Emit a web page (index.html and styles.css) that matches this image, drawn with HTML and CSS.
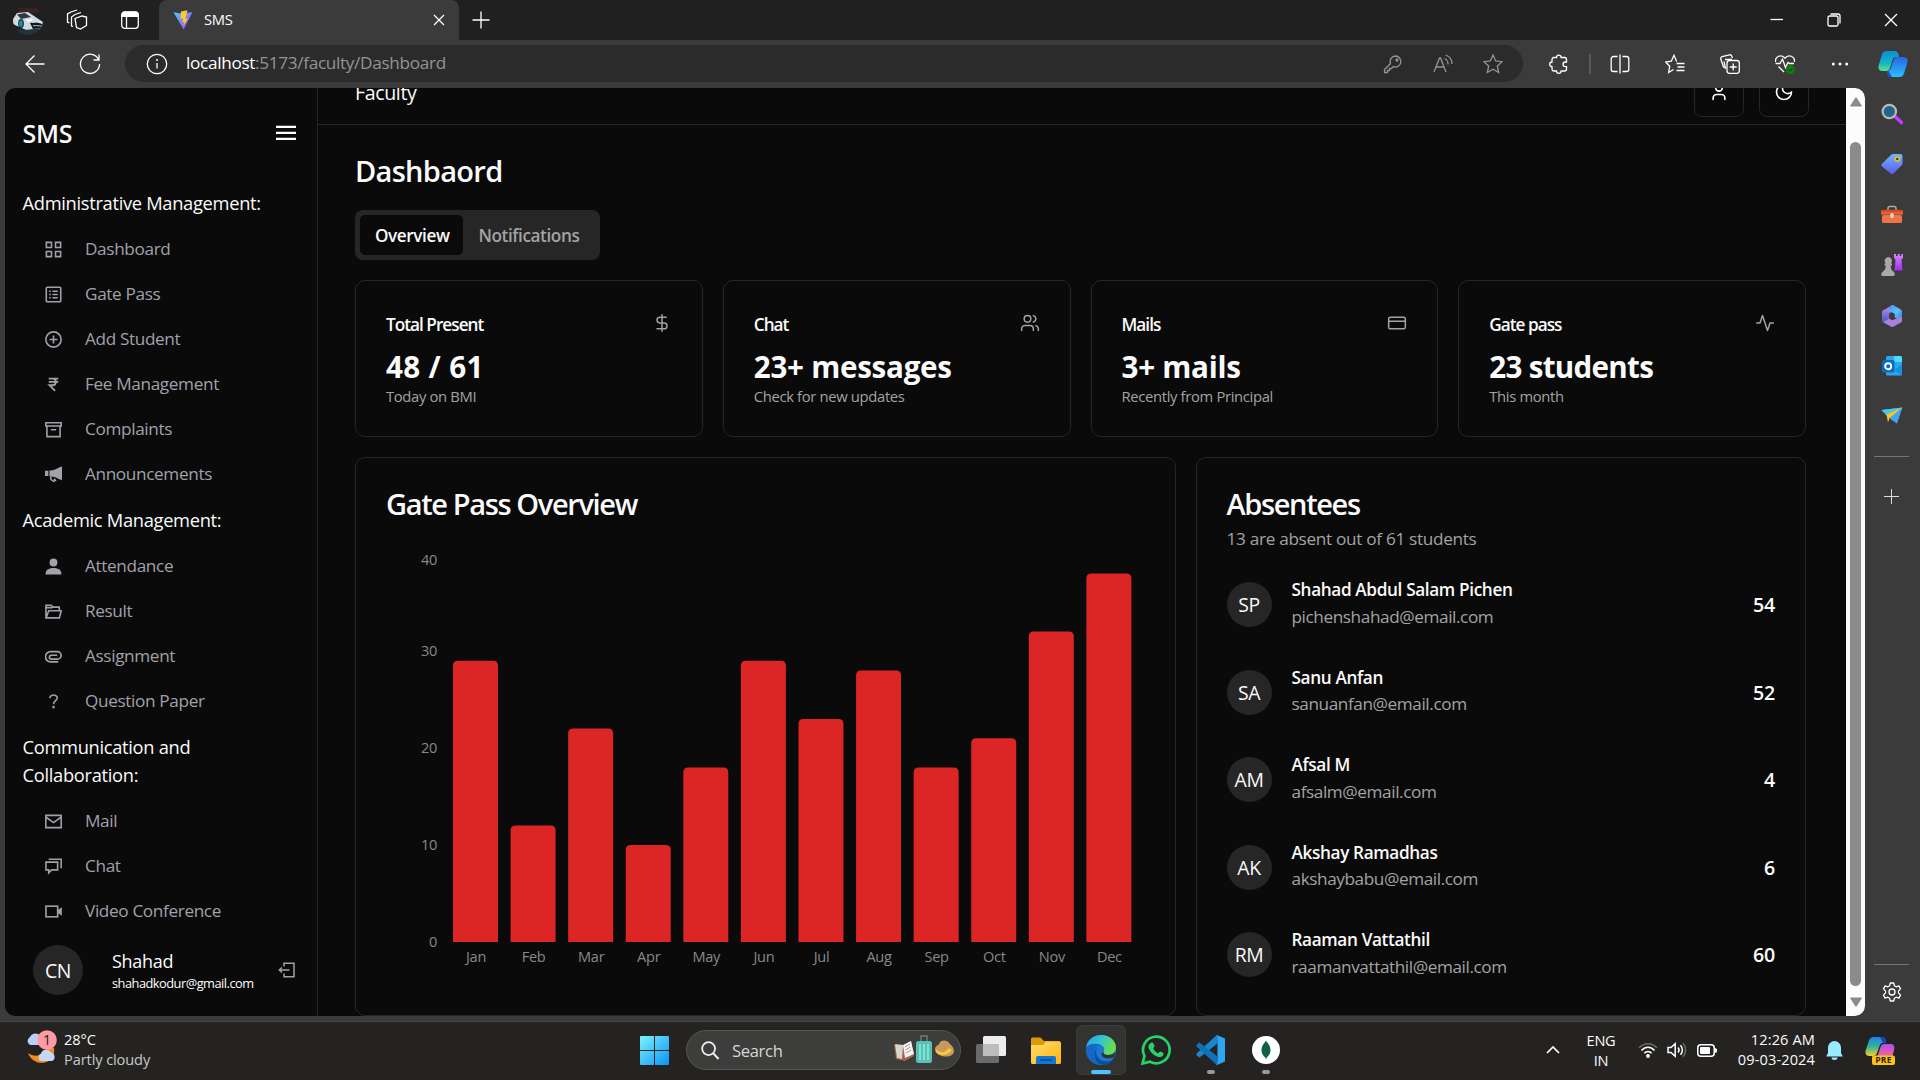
FILE: index.html
```html
<!DOCTYPE html>
<html lang="en">
<head>
<meta charset="utf-8">
<title>SMS</title>
<link rel="stylesheet" href="styles.css">
</head>
<body>
<svg class="defs" width="0" height="0" aria-hidden="true">
  <defs>
    <linearGradient id="gVite" x1="0" y1="0" x2="1" y2="1"><stop offset="0" stop-color="#41d1ff"/><stop offset="1" stop-color="#bd34fe"/></linearGradient>
    <linearGradient id="gTeal" x1="0" y1="0" x2="0" y2="1"><stop offset="0" stop-color="#0d8fd0"/><stop offset=".6" stop-color="#12b5c9"/><stop offset="1" stop-color="#5ee08c"/></linearGradient>
    <linearGradient id="gBlue" x1="0" y1="0" x2="0" y2="1"><stop offset="0" stop-color="#2764e7"/><stop offset="1" stop-color="#2bc0ff"/></linearGradient>
    <linearGradient id="gTag" x1="0" y1="0" x2="0" y2="1"><stop offset="0" stop-color="#6cb4ff"/><stop offset="1" stop-color="#5b5fe8"/></linearGradient>
    <linearGradient id="gRed" x1="0" y1="0" x2="0" y2="1"><stop offset="0" stop-color="#d13c12"/><stop offset="1" stop-color="#f3713f"/></linearGradient>
    <linearGradient id="gPurple" x1="0" y1="0" x2="0" y2="1"><stop offset="0" stop-color="#d685ff"/><stop offset="1" stop-color="#a22cf0"/></linearGradient>
    <linearGradient id="gWin" x1="0" y1="0" x2="1" y2="1"><stop offset="0" stop-color="#7df3fb"/><stop offset="1" stop-color="#0a93f5"/></linearGradient>
    <linearGradient id="gFolder" x1="0" y1="0" x2="1" y2="1"><stop offset="0" stop-color="#ffdc6b"/><stop offset="1" stop-color="#fcb50f"/></linearGradient>
    <linearGradient id="gEdge" x1="0" y1="0" x2="1" y2=".4"><stop offset="0" stop-color="#2a9de8"/><stop offset=".5" stop-color="#33c1d6"/><stop offset="1" stop-color="#66e04e"/></linearGradient>
    <linearGradient id="gPre" x1="0" y1="0" x2="0" y2="1"><stop offset="0" stop-color="#1f7ff0"/><stop offset=".5" stop-color="#2fb39a"/><stop offset="1" stop-color="#f2cf2b"/></linearGradient>
    <linearGradient id="gPink" x1="0" y1="0" x2="0" y2="1"><stop offset="0" stop-color="#b04df0"/><stop offset="1" stop-color="#ff6a80"/></linearGradient>
    <linearGradient id="gOffL" x1="0" y1="0" x2="0" y2="1"><stop offset="0" stop-color="#b79af0"/><stop offset="1" stop-color="#4a4fc4"/></linearGradient>
    <linearGradient id="gOffR" x1="0" y1="0" x2="1" y2="1"><stop offset="0" stop-color="#4a8ff0"/><stop offset=".5" stop-color="#5bc4fa"/><stop offset="1" stop-color="#3566dd"/></linearGradient>
    <clipPath id="cAvatar"><circle cx="15" cy="15" r="15"/></clipPath>
  </defs>
</svg>

<div class="screen">
  <header class="titlebar">
    <svg class="profile-pic" viewBox="0 0 30 30"><g clip-path="url(#cAvatar)"><rect width="30" height="30" fill="#1b2023"/><path d="M6 3h20v5H6z" fill="#3a2220"/><path d="M0 14L4 8l11-1 6 4 9 6v7l-12 3L4 21 0 19z" fill="#cfdae2"/><path d="M4 9.500l8-1.500 6 4-10 2z" fill="#2c3a44"/><path d="M17 18l6-1 6 2v4l-9 1z" fill="#10181e"/><path d="M13 15l6-1 1 1-5 2z" fill="#fff"/><path d="M19 17.500l9-.5M20 20.500l9 .5" stroke="#dde6ec" stroke-width=".8"/><ellipse cx="8" cy="18.500" rx="2.900" ry="4.500" fill="#12323b"/><ellipse cx="7.800" cy="18.500" rx="1.900" ry="3.300" fill="#1e8b9d"/><path d="M0 24l12 1 18-2v7H0z" fill="#22333d"/></g></svg>
    <svg class="ic-ws" viewBox="0 0 22 22"><g class="line"><path d="M8.500 9.500l7-2.500 4.500 1v8.500l-6 3.500-4-1.500z" transform="translate(.5 0)"/><path d="M7 17.500L5.500 17V8L9 5.500l6-2"/><path d="M3.500 14L1.500 13.200V5L5 3l6-2"/></g></svg>
    <svg class="ic-tabs" viewBox="0 0 20 20"><rect x="1.700" y="2" width="16.600" height="16.300" rx="3" class="line"/><path d="M1.500 7V4.500a3 3 0 013-3h11a3 3 0 013 3V7z" fill="#fff"/><path d="M6.500 7v11" class="line"/></svg>
    <div class="tab">
      <svg class="favicon" viewBox="0 0 20 20"><path d="M.5 2.200l9 1.600 10-1.800L10.600 19.400z" fill="url(#gVite)"/><path d="M14.500.3L8 1.600l-.5 7.200 2.500-.4-.8 4 2-.6-1 4.200 4.800-7.600-2.600.5z" fill="#ffc928"/></svg>
      <span class="tab-title">SMS</span>
      <svg class="ic-close" viewBox="0 0 12 12"><path d="M1 1l10 10M11 1L1 11" class="line"/></svg>
    </div>
    <svg class="ic-new" viewBox="0 0 18 18"><path d="M9 .5v17M.5 9h17" class="line"/></svg>
    <div class="window-buttons">
      <svg viewBox="0 0 14 14"><path d="M.5 6.500h12.500" class="line"/></svg>
      <svg viewBox="0 0 14 14"><rect x="1" y="3" width="10" height="10" rx="1.500" class="line"/><path d="M3.500 1H11a2 2 0 012 2v7.500" class="line"/></svg>
      <svg viewBox="0 0 14 14"><path d="M1 1l12 12M13 1L1 13" class="line"/></svg>
    </div>
  </header>

  <div class="toolbar">
    <svg class="ic-back" viewBox="0 0 20 20"><path d="M19.500 10H1M9.500 1.500L1 10l8.500 8.500" class="line"/></svg>
    <svg class="ic-reload" viewBox="0 0 22 22"><path d="M19.800 7A9.600 9.600 0 1020.600 11M20 1.500V7h-5.500" class="line"/></svg>
    <div class="address">
      <svg class="ic-info" viewBox="0 0 22 22"><circle cx="11" cy="11" r="9.700" class="line"/><path d="M11 10v5.500" class="line"/><circle cx="11" cy="7" r="1" fill="#fff"/></svg>
      <span class="url"><b>localhost</b>:5173/faculty/Dashboard</span>
      <div class="address-icons">
        <svg viewBox="0 0 20 20"><path d="M12.500 2a5.500 5.500 0 11-2.200 10.600L8.500 14.500H6.500v2h-2V18.500H1.500v-3l6-6A5.500 5.500 0 0112.500 2z" class="dim"/><circle cx="14" cy="6" r="1" class="dim"/></svg>
        <svg viewBox="0 0 20 20"><path d="M1 18L6.500 4h1L13 18M3 13h8M11.500 4.500a6 6 0 013.500 6M12.500 1a9.500 9.500 0 016.500 9" class="dim"/></svg>
        <svg viewBox="0 0 20 20"><path d="M10 1l2.700 6 6.500.7-4.900 4.300 1.400 6.500L10 15.200l-5.700 3.300 1.400-6.500L.8 7.700 7.300 7z" class="dim"/></svg>
      </div>
    </div>
    <div class="actions">
      <svg viewBox="0 0 20 20"><path d="M4.500 3.500h3a2.300 2.300 0 014.600 0h3.400a2 2 0 012 2V8h-1.200a2.300 2.300 0 000 4.600h1.200v2.400a2 2 0 01-2 2h-3.400a2.300 2.300 0 01-4.600 0h-3a2 2 0 01-1.500-2v-2.400a2.300 2.300 0 010-4.600V5.500a2 2 0 011.500-2z" class="line"/></svg>
      <i class="bar-divider"></i>
      <svg viewBox="0 0 20 20"><path d="M7.500 2.500H3.500a2.300 2.300 0 00-2.300 2.300v10.400a2.300 2.300 0 002.300 2.300h4M12.500 2.500h4a2.300 2.300 0 012.300 2.300v10.400a2.300 2.300 0 01-2.300 2.300h-4M10 .5v19" class="line"/></svg>
      <svg viewBox="0 0 20 20"><path d="M12 7.200h-.5L9 1.300 6.300 7.200.7 8l4 4.200-1 6.300L8.500 15.500M11.500 9.500h8M12.500 13h7M11.500 16.500h8" class="line"/></svg>
      <svg viewBox="0 0 20 20"><path d="M4.500 13.500l-1-.5-2.700-8A2 2 0 012 2.700L9.500.8a2 2 0 012.300 1.300L12.500 4M5.500 15L4 7.500M5 5.500h7" class="line"/><rect x="7" y="6.500" width="12.300" height="12.800" rx="2.500" class="line"/><path d="M13.200 9.500v7M9.700 13h7" class="line"/></svg>
      <svg viewBox="0 0 20 20"><path d="M.5 8C-.3 2.500 6.500-.5 10 4.200 13.500-.5 20.300 2.500 19.500 8M.5 9.500H5L7.500 5l3 8.500L13 8.500l1.500 1H19M3.500 12.500L9 18" class="line"/><circle cx="15.300" cy="15.500" r="4.500" fill="#107c10"/><path d="M13.300 15.500l1.500 1.500 2.600-2.700" fill="none" stroke="#082f08"/></svg>
      <svg viewBox="0 0 20 20"><g fill="#fff"><circle cx="3.300" cy="10" r="1.500"/><circle cx="10" cy="10" r="1.500"/><circle cx="16.700" cy="10" r="1.500"/></g></svg>
      <svg class="copilot" viewBox="0 0 30 28"><path d="M8.500 1H17c2 0 3 1.500 3.500 3.500L21 7H18c-2 0-3 1.200-3.500 3L12 18c-.7 2-2 3-4 3H4.500C1 21-.3 18.500.8 15L4 4.500C4.700 2.200 6.200 1 8.500 1z" fill="url(#gTeal)"/><path d="M21.500 27H13c-2 0-3-1.500-3.500-3.500L9 21c2 0 3.500-1.200 4-3l2.500-8c.7-2 2-3 4-3h6c3.500 0 4.800 2.500 3.700 6L26 23.500c-.7 2.300-2.200 3.500-4.500 3.500z" fill="url(#gBlue)"/><path d="M9 21h1.500L14 27h-1.500C10 27 9 24 9 21z" fill="#1d4fd0"/></svg>
    </div>
  </div>

  <div class="viewport">
    <div class="page">
      <aside class="sidebar">
        <div class="brand"><h2>SMS</h2><svg viewBox="0 0 20 16"><path d="M0 1.800h20M0 7.800h20M0 13.800h20" stroke="#fff" stroke-width="2.200"/></svg></div>
        <h3>Administrative Management:</h3>
        <ul>
          <li><svg viewBox="0 0 16 16"><path d="M1.300 1.300h4.800v4.800H1.300zM9.900 1.300h4.800v4.800H9.900zM1.300 9.900h4.800v4.800H1.300zM9.900 9.900h4.800v4.800H9.900z"/></svg>Dashboard</li>
          <li><svg viewBox="0 0 16 16"><rect x="1.200" y="1.200" width="13.600" height="13.600" rx="1"/><path d="M4 5h1.500M7 5h5M4 8h1.500M7 8h5M4 11h1.500M7 11h5"/></svg>Gate Pass</li>
          <li><svg viewBox="0 0 16 16"><circle cx="8" cy="8" r="7.200"/><path d="M8 4.300v7.400M4.300 8h7.400"/></svg>Add Student</li>
          <li><svg viewBox="0 0 16 16"><path d="M3.500 2.500h9M3.500 5.600h9M4 2.500h3c4.200 0 4.200 6.200 0 6.200H4.200L9.500 14" stroke-width="1.700"/></svg>Fee Management</li>
          <li><svg viewBox="0 0 16 16"><path d="M.8 1.700h14.400v3H.8zM1.800 4.700v10h12.400v-10M5.500 8.300h5"/></svg>Complaints</li>
          <li><svg viewBox="0 0 16 16"><path d="M0 4.500h3.200v5H0zM4.200 4.300C8.500 4.300 12 2.500 14.500.8H16V13h-1.500C12 11.300 9 10 4.200 9.800z" fill="#a1a1aa" stroke="none"/><path d="M5.500 10c-.5 2 .5 4 3 4.300l1.300-.8L8.500 12"/></svg>Announcements</li>
        </ul>
        <h3>Academic Management:</h3>
        <ul>
          <li><svg viewBox="0 0 16 16"><g fill="#a1a1aa" stroke="none"><circle cx="8" cy="4.200" r="3.700"/><path d="M.5 15.500C.5 11.500 3 9.500 8 9.500s7.500 2 7.500 6z"/></g></svg>Attendance</li>
          <li><svg viewBox="0 0 16 16"><path d="M.9 14V2.200h5l1.500 1.700h6V7M1 14L3.500 7.300h11.800L13.500 14zM1 4.500h6"/></svg>Result</li>
          <li><svg viewBox="0 0 16 16"><path d="M12.500 13H5.200a4.600 4.600 0 010-9.500h6.500a3.300 3.300 0 010 6.900H6a1.800 1.800 0 010-3.600h5.500" stroke-width="1.600"/></svg>Assignment</li>
          <li><svg viewBox="0 0 16 16"><path d="M4.600 5C4.600.8 11.600 1 11.500 4.800 11.500 7.200 8 7.200 8 10.500"/><circle cx="8" cy="13.300" r=".5"/></svg>Question Paper</li>
        </ul>
        <h3>Communication and Collaboration:</h3>
        <ul>
          <li><svg viewBox="0 0 16 16"><path d="M.8 2.200h14.400v11.600H.8zM1 4l7 5 7-5"/></svg>Mail</li>
          <li><svg viewBox="0 0 16 16"><path d="M.9 3.900h11v7.300H6.300L3.500 14v-2.800H.9zM3.500 1.200h11.700v8.500"/></svg>Chat</li>
          <li><svg viewBox="0 0 16 16"><rect x=".9" y="3" width="11" height="10"/><path d="M12 7l3.500-2.500v7L12 9z" fill="#a1a1aa" stroke-width=".6"/></svg>Video Conference</li>
        </ul>
        <div class="account">
          <span class="avatar big">CN</span>
          <div class="who"><span class="who-name">Shahad</span><span class="who-mail">shahadkodur@gmail.com</span></div>
          <svg viewBox="0 0 17 16"><path d="M6 4.500V1.200h10v13.600H6v-3.300M11.500 8H1M4 5.500L1.300 8 4 10.500" fill="none" stroke="#a1a1aa" stroke-width="1.500"/></svg>
        </div>
      </aside>

      <main class="main">
        <div class="topnav">
          <span>Faculty</span>
          <div class="nav-buttons">
            <button><svg class="lucide" viewBox="0 0 24 24"><path d="M19 21v-2a4 4 0 0 0-4-4H9a4 4 0 0 0-4 4v2"/><circle cx="12" cy="7" r="4"/></svg></button>
            <button><svg class="lucide" viewBox="0 0 24 24"><path d="M12 3a6 6 0 0 0 9 9 9 9 0 1 1-9-9Z"/></svg></button>
          </div>
        </div>
        <div class="content">
          <h1>Dashbaord</h1>
          <div class="tabs"><span class="on">Overview</span><span>Notifications</span></div>
          <div class="grid stats">
            <section class="card stat"><div class="stat-head"><h4>Total Present</h4><svg class="lucide" viewBox="0 0 24 24"><path d="M12 2v20M17 5H9.500a3.500 3.500 0 0 0 0 7h5a3.500 3.500 0 0 1 0 7H6"/></svg></div><strong class="num">48 / 61</strong><p>Today on BMI</p></section>
            <section class="card stat"><div class="stat-head"><h4>Chat</h4><svg class="lucide" viewBox="0 0 24 24"><path d="M16 21v-2a4 4 0 0 0-4-4H6a4 4 0 0 0-4 4v2"/><circle cx="9" cy="7" r="4"/><path d="M22 21v-2a4 4 0 0 0-3-3.870M16 3.130a4 4 0 0 1 0 7.750"/></svg></div><strong>23+ messages</strong><p>Check for new updates</p></section>
            <section class="card stat"><div class="stat-head"><h4>Mails</h4><svg class="lucide" viewBox="0 0 24 24"><rect width="20" height="14" x="2" y="5" rx="2"/><path d="M2 10h20"/></svg></div><strong>3+ mails</strong><p>Recently from Principal</p></section>
            <section class="card stat"><div class="stat-head"><h4>Gate pass</h4><svg class="lucide" viewBox="0 0 24 24"><path d="M22 12h-4l-3 9L9 3l-3 9H2"/></svg></div><strong class="words">23 students</strong><p>This month</p></section>
          </div>
          <div class="grid panels">
            <section class="card panel">
              <h2>Gate Pass Overview</h2>
              <svg class="chart" viewBox="0 0 759 437">
                <g id="bars"></g>
                <g class="ylab"><text x="51" y="17">40</text><text x="51" y="107.500">30</text><text x="51" y="205">20</text><text x="51" y="302">10</text><text x="51" y="398.500">0</text></g>
                <g class="xlab" id="months"></g>
              </svg>
            </section>
            <section class="card panel">
              <h2>Absentees</h2>
              <p class="desc">13 are absent out of 61 students</p>
              <div class="people">
                <div class="person"><span class="avatar">SP</span><div><h5>Shahad Abdul Salam Pichen</h5><p>pichenshahad@email.com</p></div><b>54</b></div>
                <div class="person"><span class="avatar">SA</span><div><h5>Sanu Anfan</h5><p>sanuanfan@email.com</p></div><b>52</b></div>
                <div class="person"><span class="avatar">AM</span><div><h5>Afsal M</h5><p>afsalm@email.com</p></div><b>4</b></div>
                <div class="person"><span class="avatar">AK</span><div><h5>Akshay Ramadhas</h5><p>akshaybabu@email.com</p></div><b>6</b></div>
                <div class="person"><span class="avatar">RM</span><div><h5>Raaman Vattathil</h5><p>raamanvattathil@email.com</p></div><b>60</b></div>
              </div>
            </section>
          </div>
        </div>
      </main>
      <div class="scrollbar">
        <svg viewBox="0 0 12 10"><path d="M6 .5L11.500 9H.5z" fill="#8b8b8b" stroke="#8b8b8b" stroke-linejoin="round"/></svg>
        <i></i>
        <svg viewBox="0 0 12 10"><path d="M6 9.500L11.500 1H.5z" fill="#8b8b8b" stroke="#8b8b8b" stroke-linejoin="round"/></svg>
      </div>
    </div>

    <nav class="edge-bar">
      <svg viewBox="0 0 22 22"><path d="M14.500 14l6 5.500" stroke="#c43cff" stroke-width="3.600" stroke-linecap="round"/><circle cx="8.300" cy="8.500" r="6.700" fill="#24648a" stroke="#b9b9b9" stroke-width="2.200"/></svg>
      <svg viewBox="0 0 22 22"><path d="M12 1h7.500a2 2 0 012 2v7.500a2 2 0 01-.6 1.500l-8.400 8.500a2 2 0 01-2.800 0L1 13.500a2 2 0 010-2.800L10.500 1.600A2 2 0 0112 1z" fill="url(#gTag)"/><circle cx="16.300" cy="6" r="2" fill="#333" stroke="#ffc20e" stroke-width="1.600"/></svg>
      <svg viewBox="0 0 22 22"><path d="M7 6V4.200A1.700 1.700 0 018.700 2.500h4.600A1.700 1.700 0 0115 4.200V6" fill="none" stroke="#aaa" stroke-width="1.500"/><rect x="1" y="11" width="20" height="8" rx="1.500" fill="#f27248"/><path d="M0 7a1.300 1.300 0 011.300-1.300h19.400A1.300 1.300 0 0122 7v3.500H0z" fill="url(#gRed)"/><rect x="9.400" y="9" width="3.200" height="5" rx="1.500" fill="#d6d6d6"/></svg>
      <svg viewBox="0 0 22 22"><path d="M13 0h2v2h1.700V0h2v2h1.600V0H22v4l-1.500 1.500.7 9L22 16.500h-9.500L14 14l.5-8.500L13 4z" fill="url(#gPurple)"/><path d="M7.300 3a3.800 3.800 0 012.500 6.500H11v2H9.700c0 3 .5 4.500 3 6.500 1.300.8 1.600 4-.2 4h-11c-1.800 0-1.500-3.200 0-4 2.500-2 3.200-3.500 3.200-6.500H3.500v-2h1.300A3.800 3.800 0 017.300 3z" fill="#a9a9a9"/></svg>
      <svg viewBox="0 0 22 22"><path d="M11.500.3L2.300 5.200A2.300 2.300 0 001 7.200v9.500l1.500.8L8.200 14V8.500l5.300-3.800V1z" fill="url(#gOffL)"/><path d="M10.500.3a2 2 0 011.800 0l7.400 4.200a2.300 2.300 0 011.300 2V15l-1 1-6.200-3.500V8.700L8.200 6.200V2z" fill="url(#gOffR)"/><path d="M21 11.500v4a2.300 2.300 0 01-1.200 2l-7.500 4.200a2 2 0 01-2 0L2 17.200 8.200 13.500l3 1.700z" fill="#a97fd9"/></svg>
      <svg viewBox="0 0 22 22"><rect x="5" y="1" width="16" height="19.500" rx="1.500" fill="#28a8ea"/><path d="M13 1h6.500A1.500 1.500 0 0121 2.500V7h-8z" fill="#50d9ff"/><path d="M21 9.500v11l-8-5.500z" fill="#1490df"/><rect x="1" y="5" width="12.500" height="12.500" rx="1.500" fill="#0a6cc0"/><circle cx="7.200" cy="11.200" r="3" fill="none" stroke="#fff" stroke-width="1.900"/></svg>
      <svg viewBox="0 0 22 22"><path d="M.5 5L21.500 2.500 16 18.500l-6-4z" fill="#3fa4f4"/><path d="M.5 5L21.500 2.500 6 11z" fill="#45c6f5"/><path d="M5.500 9.500L21.500 2.500 8.500 13 7 17.500z" fill="#ffc50f"/></svg>
      <i class="rule"></i>
      <svg class="plus" viewBox="0 0 15 15"><path d="M7.500 0v15M0 7.500h15" stroke="#ddd" fill="none"/></svg>
      <i class="rule low"></i>
      <svg class="gear" viewBox="0 0 24 24"><path d="M10.300 2h3.400l.7 2.800 1.700 1 2.800-.9 1.700 3-2.100 2v2.200l2.100 2-1.700 3-2.800-.9-1.700 1-.7 2.800h-3.400l-.7-2.800-1.700-1-2.800.9-1.700-3 2.100-2v-2.200l-2.100-2 1.700-3 2.800.9 1.700-1z" stroke-linejoin="round" class="line"/><circle cx="12" cy="11" r="3" class="line"/></svg>
    </nav>
  </div>

  <footer class="taskbar">
    <div class="weather">
      <svg viewBox="0 0 32 34"><path d="M22 16C20 26 10 28 3 23c3 9 14 13 22 7 3-3 5-8 4-12z" fill="#f08c1b"/><path d="M5 15a4.500 4.500 0 010-8 6 6 0 0111 0 4 4 0 012 8z" fill="#b9cff5"/><path d="M16 31a4 4 0 010-7.500 5.500 5.500 0 0110-1 4.500 4.500 0 011 8.500z" fill="#c5d7f8"/><circle cx="22" cy="10" r="9.800" fill="#ff99a4"/><text x="22" y="15" text-anchor="middle" class="badge-text">1</text></svg>
      <div><span>28°C</span><span class="soft">Partly cloudy</span></div>
    </div>
    <div class="apps">
      <svg class="win" viewBox="0 0 29 29"><g fill="url(#gWin)"><path d="M1 0h13v14H0V1a1 1 0 011-1zM15 0h13a1 1 0 011 1v13H15zM0 15h14v14H1a1 1 0 01-1-1zM15 15h14v13a1 1 0 01-1 1H15z"/></g></svg>
      <div class="search">
        <svg viewBox="0 0 20 20"><circle cx="8" cy="8" r="6.800" fill="none" stroke="#eee" stroke-width="1.900"/><path d="M13 13l5.500 6" stroke="#eee" stroke-width="2.200"/></svg>
        <span>Search</span>
        <svg class="trip" viewBox="0 0 60 30"><path d="M0 10l8 1 9-5 3 15-9 5-9-2z" fill="#a8604a"/><path d="M1 9l8 1-1 14-5-1z" fill="#d8d5d0"/><path d="M9 10l8-4 3 13-9 4z" fill="#f4f4f4"/><path d="M11 12l5-3M11.500 15l5-3M12 18l5-3" stroke="#999"/><path d="M27 6V1h6v5" fill="none" stroke="#777" stroke-width="1.500"/><rect x="22" y="6" width="16" height="22" rx="2.500" fill="#55c4b6"/><path d="M26 9v16M30 9v16M34 9v16" stroke="#a5ece0" stroke-width="1.300"/><path d="M41 15c0-4 2-4 4-6 2-5 9-4 11 0 4 3 5 8 3 10-5 5-17 2-18-4z" fill="#c79a5b"/><path d="M42 14c4 4 9 4 13-1l3 2c-4 6-12 7-16 2z" fill="#f5c842"/></svg>
      </div>
      <svg class="tv" viewBox="0 0 30 28"><rect x="7" y="0" width="23" height="20" rx="1.500" fill="#ececec"/><rect x="0" y="8" width="23" height="19" rx="1.500" fill="#777" fill-opacity=".85"/><path d="M7 8h16v12H7z" fill="#bdbdbd"/></svg>
      <svg class="folder" viewBox="0 0 30 27"><path d="M0 2a1.500 1.500 0 011.500-1.500h8L13 4h16v7H0z" fill="#d99a08"/><path d="M0 8h12l3-3.500h13.500A1.500 1.500 0 0130 6v19.500a1.500 1.500 0 01-1.500 1.500h-27A1.500 1.500 0 010 25.500z" fill="url(#gFolder)"/><path d="M5 27v-6a2 2 0 012-2h16a2 2 0 012 2v6z" fill="#1477d1"/><path d="M9 23h12" stroke="#0b4a92" stroke-width="1.500"/></svg>
      <div class="app active"><svg viewBox="0 0 30 30"><circle cx="15" cy="15" r="15" fill="#1b78d4"/><path d="M0 13C1 5 7.500 0 15 0c9 0 15 6 15 12.500 0 4.500-3.500 7.500-8 7.500-3.500 0-5-1.500-4.500-3 1.500-2 1-6-3.500-7.500C8.500 8 2 9.500 0 13z" fill="url(#gEdge)"/><path d="M14 9.500c-5 1.500-8 8-4.500 14 2.500 4.500 7 6 10 6-1 .4-3 .6-5 .5C6 29.500 0 23 0 15v-2c2-4 9-5 14-3.500z" fill="#1467c6"/><path d="M11 12.500c-3 6 1 13.500 8.500 14 4 .2 7-1 8.800-3.500C25 29.500 19 31 14 29 8 26 7 17 11 12.500z" fill="#0f4d97"/><path d="M17.500 17c-.5 1.500 1 3 4.500 3 3 0 5.500-1 7-3-.2 2.500-.6 4-1.200 5-3 1.800-8.300 2-11.300-.5-1.500-1.500-1.500-3.500 1-4.500z" fill="#333332"/></svg><i></i></div>
      <svg class="wa" viewBox="0 0 30 30"><path d="M1.500 28.500l2-7.500A13.300 13.300 0 119 26.600z" fill="none" stroke="#25d366" stroke-width="2.700"/><path d="M10.500 7.500c.8-.3 1.500 0 1.800.8l1.200 2.700c.2.700-1 1.700-1.300 2.200 1 2.500 2.700 4 5 5 .6-.2 1.500-1.800 2.200-1.700l3 1.500c.5 1-.3 3.500-2.500 4-4 1-11.500-4.500-12.500-10-.3-2 1.500-4 3.100-4.500z" fill="#25d366"/></svg>
      <div class="app vs"><svg viewBox="0 0 30 30"><path d="M21 9L3.500 22.500.5 20.200v-1.700L20 .8l2 1z" fill="#1a86cf"/><path d="M21 21L3.500 7.500.5 9.800v1.700L20 29.200l2-1z" fill="#0e72b8"/><path d="M21 0l8 3.500v23L21 30l-1.500-.5c1 0 2-.5 2-2v-25c0-1.500-1-2-2-2z" fill="#2ea5f0"/></svg><i></i></div>
      <div class="app mongo"><svg viewBox="0 0 28 28"><circle cx="14" cy="14" r="14" fill="#fff"/><path d="M14 4.500c1 2.500 4.500 4.500 4.500 9.500 0 4-2.500 6.500-4 7.700L14 24l-.5-2.300C12 20.500 9.500 18 9.500 14c0-5 3.500-7 4.500-9.500z" fill="#116149"/></svg><i></i></div>
    </div>
    <div class="tray">
      <svg class="chev" viewBox="0 0 14 8"><path d="M1 7l6-6 6 6" fill="none" stroke="#fff" stroke-width="1.700"/></svg>
      <div class="lang"><span>ENG</span><span>IN</span></div>
      <svg class="wifi" viewBox="0 0 20 16"><g fill="none" stroke="#fff" stroke-width="1.600"><path d="M1 6C6 .3 14 .3 19 6" stroke="#6a6a68"/><path d="M3.500 8.500c3.800-4.300 9.200-4.300 13 0M6.300 11.300c2.200-2.500 5.200-2.500 7.400 0"/></g><circle cx="10" cy="14" r="1.900" fill="#fff"/></svg>
      <svg class="vol" viewBox="0 0 20 16"><g fill="none" stroke="#fff" stroke-width="1.500"><path d="M1 5.500h3L8.200 1.700v12.600L4 10.500H1z"/><path d="M11 5.500c1.300 1.500 1.300 3.500 0 5M13.500 3.300c2.500 2.700 2.500 6.700 0 9.400"/><path d="M16 1.300c3.500 3.800 3.500 9.600 0 13.400" stroke="#6a6a68"/></g></svg>
      <svg class="bat" viewBox="0 0 20 13"><rect x=".8" y=".8" width="16.400" height="11.400" rx="3" fill="none" stroke="#fff" stroke-width="1.500"/><rect x="3" y="3" width="10" height="7" rx="1" fill="#fff"/><path d="M18 4l2 1v3l-2 1z" fill="#fff"/></svg>
      <div class="clock"><span>12:26 AM</span><span>09-03-2024</span></div>
      <svg class="bell" viewBox="0 0 17 19"><path d="M8.500 0a6.500 6.500 0 016.500 6.500v5.500l1.800 3.500H.2L2 12V6.500A6.500 6.500 0 018.500 0zM5.500 16.500h6a3 2.500 0 01-6 0z" fill="#99ebff"/></svg>
      <svg class="pre" viewBox="0 0 30 29"><path d="M9 1h8c2 0 3 1 3.500 3L21 7h-3c-2 0-3 1-3.500 3L12 17c-.7 2-2 3-4 3H4.500C1 20-.3 17.500.8 14L4 4.500C5 2 6.500 1 9 1z" fill="url(#gPre)"/><path d="M15 1h2c2 0 3 1 3.500 3L21 7h-3z" fill="#1b3ec8"/><path d="M19.500 8h6c3.500 0 4.500 2.500 3.500 6l-2 8H12l3.500-11c.7-2 2-3 4-3z" fill="url(#gPink)"/><rect x="7" y="19.500" width="23" height="9.500" rx="2" fill="#ffc20e"/><text x="18.500" y="27.300" text-anchor="middle" class="pre-text">PRE</text></svg>
    </div>
  </footer>
</div>
<script src="chart.js"></script>
</body>
</html>
```
FILE: styles.css
```css
* { box-sizing: border-box; }
body { margin: 0; background: #202020; color: #fafafa; font-family: "Open Sans", "Noto Sans", sans-serif; font-size: 17.2px; letter-spacing: -.02em; }
h1, h2, h3, h4, h5, p, ul { margin: 0; padding: 0; font-weight: 400; }
ul { list-style: none; }
svg { display: block; flex: none; }
.defs { position: absolute; }
.line { fill: none; stroke: #fff; stroke-width: 1.3; }
.dim { fill: none; stroke: #949494; stroke-width: 1.3; }
.screen { width: 1920px; height: 1080px; overflow: hidden; display: flex; flex-direction: column; }

/* window title bar */
.titlebar { height: 40px; display: flex; align-items: center; background: #202020; flex: none; }
.profile-pic { width: 30px; height: 30px; margin-left: 13px; }
.ic-ws { width: 22px; height: 22px; margin-left: 23px; }
.ic-tabs { width: 20px; height: 20px; margin-left: 32px; }
.tab { width: 300px; height: 40px; margin-left: 19px; background: #3b3b3b; border-radius: 8px 8px 0 0; display: flex; align-items: center; padding: 0 14px; }
.favicon { width: 20px; height: 20px; }
.tab-title { margin: -2px 0 0 11px; font-size: 14.8px; letter-spacing: -.02em; }
.ic-close { width: 12px; height: 12px; margin-left: auto; }
.ic-new { width: 18px; height: 18px; margin-left: 13px; }
.window-buttons { margin-left: auto; display: flex; gap: 43px; margin-right: 22px; }
.window-buttons svg { width: 14px; height: 14px; }

/* address bar */
.toolbar { height: 48px; background: #3b3b3b; display: flex; align-items: center; flex: none; }
.ic-back { width: 20px; height: 20px; margin-left: 25px; margin-top: -1px; }
.ic-reload { width: 22px; height: 22px; margin-left: 34px; }
.address { width: 1398px; height: 37px; margin: -1px 0 0 24px; border-radius: 19px; background: #2b2b2b; display: flex; align-items: center; padding: 0 20px 0 21px; }
.ic-info { width: 22px; height: 22px; }
.url { margin: -2px 0 0 18px; color: #949494; letter-spacing: -.019em; }
.url b { font-weight: 400; color: #fff; }
.address-icons { margin-left: auto; display: flex; gap: 30px; }
.address-icons svg { width: 20px; height: 20px; }
.actions { display: flex; align-items: center; margin-left: 26px; }
.actions svg { width: 20px; height: 20px; margin-right: 35px; }
.actions svg:first-child { margin-right: 20px; }
.bar-divider { width: 2px; height: 20px; background: #5a5a5a; margin-right: 19px; }
.actions svg.copilot { width: 30px; height: 28px; margin: 0 0 0 -7px; }

/* viewport */
.viewport { height: 933px; flex: none; background: #3b3b3b; display: flex; padding-left: 5px; }
.page { width: 1860px; height: 928px; border-radius: 10px; overflow: hidden; background: #0a0a0a; display: flex; }
.sidebar { width: 313px; border-right: 1px solid #262626; padding: 0 18px 0 17.5px; flex: none; }
.brand { height: 100.500px; display: flex; justify-content: space-between; align-items: flex-start; padding-top: 27px; }
.brand h2 { font-size: 25px; line-height: 36px; font-weight: 600; letter-spacing: -.01em; }
.brand svg { width: 20px; height: 16px; margin: 10px 3px 0 0; }
.sidebar h3 { font-size: 18.3px; line-height: 28px; letter-spacing: -.0165em; margin: 0 0 9.5px; }
.sidebar ul + h3 { margin-top: 9.5px; }
.sidebar li { height: 45px; display: flex; align-items: center; gap: 23px; padding-left: 22.500px; color: #a1a1aa; letter-spacing: -.021em; }
.sidebar li svg { width: 17px; height: 17px; margin-top: 1px; fill: none; stroke: #a1a1aa; stroke-width: 1.500; }
.account { display: flex; align-items: center; margin-top: 12px; padding-left: 10.500px; }
.avatar { width: 45px; height: 45px; border-radius: 50%; background: #262626; display: flex; align-items: center; justify-content: center; font-size: 19.4px; letter-spacing: -.02em; flex: none; }
.avatar.big { width: 50px; height: 50px; }
.who { margin-left: 29px; display: flex; flex-direction: column; width: 142px; }
.who-name { font-size: 18px; line-height: 26px; letter-spacing: -.015em; }
.who-mail { font-size: 12.8px; line-height: 19px; letter-spacing: -.039em; white-space: nowrap; color: #fff; }
.account > svg { width: 17px; height: 16px; margin-left: 24px; }

.main { width: 1528px; flex: none; overflow: hidden; }
.topnav { height: 65px; margin-top: -28px; border-bottom: 1px solid #262626; display: flex; align-items: center; justify-content: space-between; padding: 0 37px; font-size: 19.6px; letter-spacing: -.02em; }
.nav-buttons { display: flex; gap: 15px; }
.nav-buttons button { width: 50px; height: 50px; border: 1px solid #262626; border-radius: 8px; background: none; display: flex; align-items: center; justify-content: center; color: #fafafa; padding: 0; }
.lucide { width: 20px; height: 20px; fill: none; stroke: currentColor; stroke-width: 2; stroke-linecap: round; stroke-linejoin: round; }
.content { padding: 26px 40px 0 37px; }
h1 { font-size: 29px; line-height: 40px; font-weight: 600; letter-spacing: -.024em; }
.tabs { display: inline-flex; margin-top: 19px; height: 50px; padding: 5px; background: #262626; border-radius: 8px; font-weight: 600; }
.tabs span { padding: 0 15px; height: 40px; line-height: 41px; border-radius: 5px; letter-spacing: -.025em; color: #a3a3a3; }
.tabs .on { background: #0a0a0a; color: #fafafa; padding-right: 14px; }
.tabs .on + span { padding-right: 16px; }
.grid { display: grid; gap: 20px; margin-top: 20px; }
.stats { grid-template-columns: repeat(4, 1fr); }
.panels { grid-template-columns: 820.5fr 610.5fr; }
.card { border: 1px solid #262626; border-radius: 10px; padding: 30px; min-width: 0; }
.stat { height: 157px; }
.stat-head { height: 26px; display: flex; align-items: center; justify-content: space-between; margin-bottom: 11px; }
.stat-head svg { color: #a3a3a3; stroke-width: 1.8; margin-top: -3px; }
.stat-head h4 { font-weight: 600; letter-spacing: -.057em; }
.stat strong { display: block; font-size: 29.6px; line-height: 38px; letter-spacing: -.009em; }
.stat strong.num { letter-spacing: .012em; }
.stat strong.words { letter-spacing: -.024em; }
.stat p { font-size: 14.8px; line-height: 20px; color: #a3a3a3; letter-spacing: -.023em; }
.panel { height: 559px; }
.panel h2 { font-size: 29px; line-height: 31px; font-weight: 600; letter-spacing: -.047em; }
.chart { width: 759px; height: 437px; margin-top: 29px; }
.chart text { font-size: 14.6px; fill: #888; letter-spacing: -.02em; }
.ylab text { text-anchor: end; }
.xlab text { text-anchor: middle; }
.desc { margin-top: 6.5px; line-height: 25px; color: #a3a3a3; letter-spacing: -.018em; }
.people { margin-top: 30.500px; display: flex; flex-direction: column; gap: 40px; }
.person { height: 47.500px; display: flex; align-items: center; }
.person div { margin-left: 20px; }
.person h5 { font-size: 17.2px; line-height: 17.500px; font-weight: 600; margin-bottom: 5px; letter-spacing: -.021em; }
.person p { line-height: 25px; color: #a3a3a3; letter-spacing: -.024em; }
.person b { margin-left: auto; font-size: 19.6px; font-weight: 600; letter-spacing: -.01em; }

.scrollbar { width: 19px; background: #fcfcfc; display: flex; flex-direction: column; align-items: center; padding: 9px 0; }
.scrollbar svg { width: 12px; height: 10px; }
.scrollbar i { width: 11px; height: 845px; margin: 35px 0 11px; border-radius: 6px; background: #8b8b8b; }

.edge-bar { width: 53px; display: flex; flex-direction: column; align-items: center; padding-top: 15px; }
.edge-bar svg { width: 22px; height: 22px; margin-bottom: 28.400px; }
.edge-bar .rule { width: 35px; height: 1px; background: #777; margin-top: 0; flex: none; }
.edge-bar .plus { width: 15px; height: 15px; margin: 32px 0 0; }
.edge-bar .rule.low { margin-top: 460px; }
.edge-bar .gear { width: 24px; height: 24px; margin: 16px 0 0; }

/* taskbar */
.taskbar { height: 59px; border-top: 1px solid #454443; background: #242322; display: flex; align-items: center; padding-bottom: 2px; }
.weather { width: 640px; display: flex; align-items: center; padding-left: 25px; font-size: 14.6px; letter-spacing: -.007em; }
.weather svg { width: 32px; height: 34px; margin-top: -6px; }
.weather div { margin: -2px 0 0 7px; }
.weather span, .lang span, .clock span { display: block; line-height: 20px; white-space: nowrap; }
.weather .soft { color: #c8c8c8; }
.badge-text { font-size: 14px; fill: #222; }
.apps { display: flex; align-items: center; }
.win { width: 29px; height: 29px; }
.search { width: 275px; height: 40px; margin-left: 17px; border-radius: 20px; background: #3d3d3c; border: 1px solid #545453; display: flex; align-items: center; padding: 0 6px 0 14px; font-size: 16.6px; color: #d5d5d5; }
.search svg { width: 19px; height: 19px; margin-right: 12px; }
.search svg.trip { width: 60px; height: 30px; margin: 0 0 0 auto; }
.tv { width: 30px; height: 28px; margin-left: 15px; }
.folder { width: 30px; height: 27px; margin-left: 25px; }
.app { width: 50px; height: 50px; display: flex; flex-direction: column; align-items: center; padding-top: 10px; border-radius: 6px; margin-left: 5px; }
.app svg { width: 30px; height: 30px; }
.app i { width: 8px; height: 4px; border-radius: 2px; background: #999; margin-top: 5px; }
.app.active { background: #333332; border: 1px solid #3c3c3b; margin-left: 15px; padding-top: 9px; }
.app.active i { width: 20px; background: #4cc2ff; }
.wa { width: 30px; height: 30px; margin-left: 15px; }
.app.vs { margin-left: 15px; }
.app.mongo svg { width: 28px; height: 28px; margin: 1px 0; }
.tray { margin-left: auto; display: flex; align-items: center; padding-right: 25px; font-size: 14.6px; letter-spacing: 0; }
.chev { width: 14px; height: 8px; margin-right: 26px; }
.lang { width: 30px; text-align: center; letter-spacing: -.02em; margin-top: -1px; }
.wifi { width: 20px; height: 16px; margin-left: 22px; }
.vol { width: 20px; height: 16px; margin-left: 9px; }
.bat { width: 20px; height: 13px; margin-left: 10px; }
.clock { width: 98px; text-align: right; letter-spacing: .007em; margin-top: -2px; }
.bell { width: 17px; height: 19px; margin-left: 11px; }
.pre { width: 30px; height: 29px; margin-left: 22px; }
.pre-text { font-size: 8.500px; font-weight: 700; fill: #222; letter-spacing: .3px; }
```
FILE: chart.js
```js
// Monthly gate pass totals
const data = [["Jan", 29], ["Feb", 12], ["Mar", 22], ["Apr", 10], ["May", 18], ["Jun", 29], ["Jul", 23], ["Aug", 28], ["Sep", 18], ["Oct", 21], ["Nov", 32], ["Dec", 38]];
const base = 394, unit = 9.7, first = 67, pitch = 57.58, width = 45, r = 5;
let bars = "", months = "";
data.forEach(([name, value], i) => {
  const x = first + i * pitch, h = value * unit;
  bars += `<path fill="#dc2626" d="M${x} ${base}v${-(h - r)}q0 ${-r} ${r} ${-r}h${width - 2 * r}q${r} 0 ${r} ${r}v${h - r}z"/>`;
  months += `<text x="${x + width / 2 + 0.5}" y="414">${name}</text>`;
});
document.getElementById("bars").innerHTML = bars;
document.getElementById("months").innerHTML = months;
```
